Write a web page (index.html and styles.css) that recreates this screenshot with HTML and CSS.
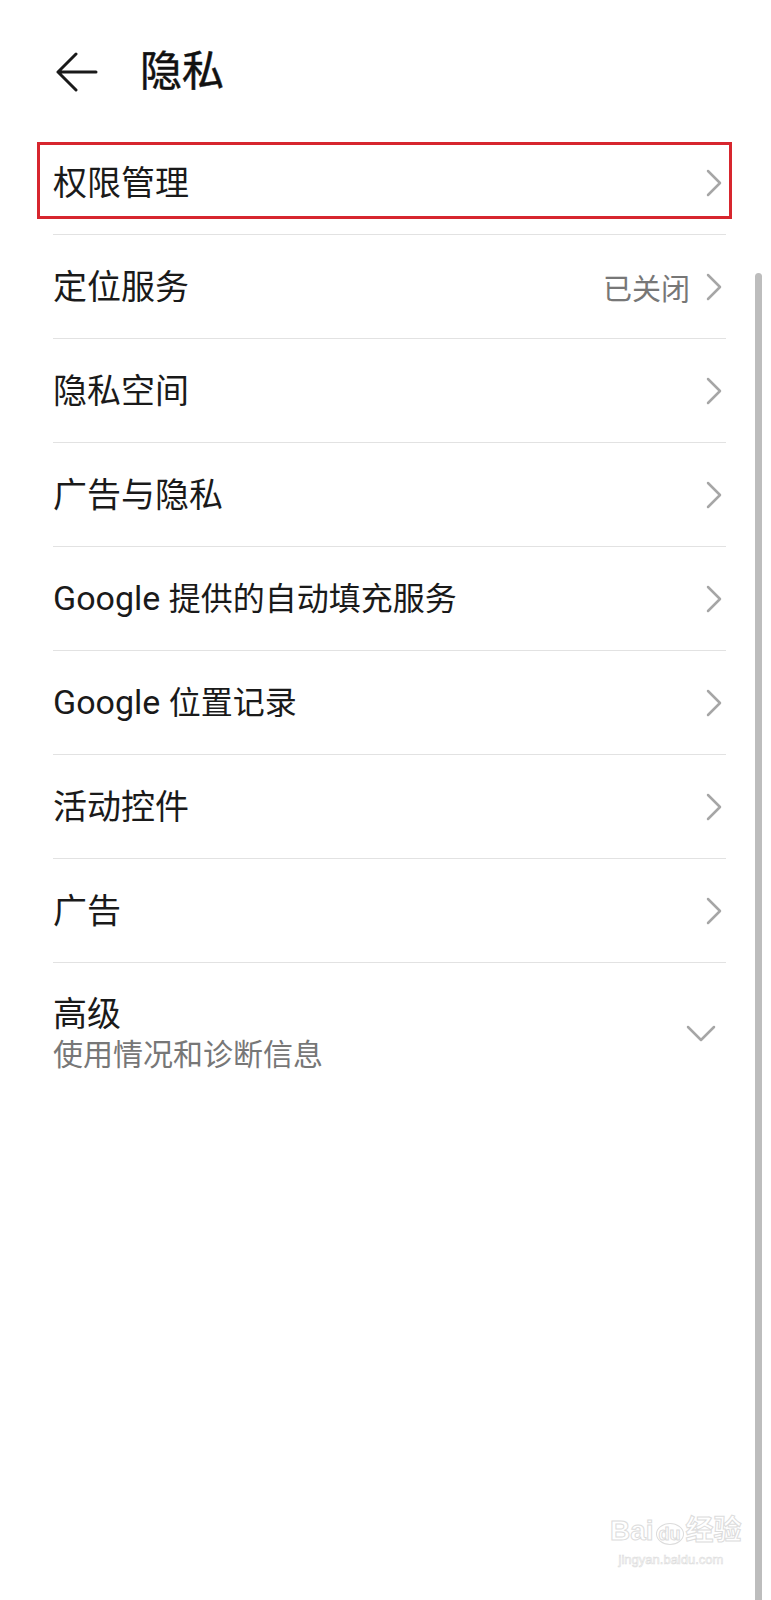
FILE: index.html
```html
<!DOCTYPE html>
<html lang="zh-CN">
<head>
  <meta charset="UTF-8" />
  <meta name="viewport" content="width=device-width, initial-scale=1.0" />
  <title>隐私</title>
  <link rel="stylesheet" href="styles.css">
</head>
<body>
<div class="screen">
  <!-- 顶部标题栏 -->
  <div class="topbar">
    <svg class="back" width="42" height="40" viewBox="0 0 42 40">
      <path d="M20 2 L2 20 L20 38 M2 20 H40" fill="none" stroke="#1a1a1a" stroke-width="3" stroke-linecap="round" stroke-linejoin="round"/>
    </svg>
    <h1>隐私</h1>
  </div>

  <!-- 设置列表 -->
  <div class="list">
    <div class="row">
      <span class="label">权限管理</span>
      <svg class="chev" width="16" height="28" viewBox="0 0 16 28"><path d="M2 2 L14 14 L2 26" /></svg>
      <div class="mark"></div>
    </div>
    <div class="row">
      <span class="label">定位服务</span>
      <span class="value">已关闭</span>
      <svg class="chev" width="16" height="28" viewBox="0 0 16 28"><path d="M2 2 L14 14 L2 26" /></svg>
    </div>
    <div class="row">
      <span class="label">隐私空间</span>
      <svg class="chev" width="16" height="28" viewBox="0 0 16 28"><path d="M2 2 L14 14 L2 26" /></svg>
    </div>
    <div class="row">
      <span class="label">广告与隐私</span>
      <svg class="chev" width="16" height="28" viewBox="0 0 16 28"><path d="M2 2 L14 14 L2 26" /></svg>
    </div>
    <div class="row">
      <span class="label">Google <span class="narrow">提供的自动填充服务</span></span>
      <svg class="chev" width="16" height="28" viewBox="0 0 16 28"><path d="M2 2 L14 14 L2 26" /></svg>
    </div>
    <div class="row">
      <span class="label">Google <span class="narrow">位置记录</span></span>
      <svg class="chev" width="16" height="28" viewBox="0 0 16 28"><path d="M2 2 L14 14 L2 26" /></svg>
    </div>
    <div class="row">
      <span class="label">活动控件</span>
      <svg class="chev" width="16" height="28" viewBox="0 0 16 28"><path d="M2 2 L14 14 L2 26" /></svg>
    </div>
    <div class="row">
      <span class="label">广告</span>
      <svg class="chev" width="16" height="28" viewBox="0 0 16 28"><path d="M2 2 L14 14 L2 26" /></svg>
    </div>
    <div class="row row-tall">
      <div class="text">
        <span class="label">高级</span>
        <span class="sub">使用情况和诊断信息</span>
      </div>
      <svg class="chev-down" width="30" height="18" viewBox="0 0 30 18"><path d="M2 2 L15 15 L28 2" /></svg>
    </div>
  </div>

  <!-- 滚动条 -->
  <div class="scrollbar"></div>

  <!-- 水印 -->
  <div class="watermark">
    <div class="wm-top">Bai<span class="wm-du">du</span>经验</div>
    <div class="wm-url">jingyan.baidu.com</div>
  </div>
</div>
</body>
</html>
```

FILE: styles.css
```css
/* 页面 */
body {
  margin: 0;
  background: #fff;
  font-family: Roboto, "Noto Sans CJK SC", sans-serif;
  color: #1a1a1a;
}

.screen {
  position: relative;
  width: 771px;
  height: 1600px;
  overflow: hidden;
}

/* 标题栏 */
.topbar {
  display: flex;
  align-items: center;
  height: 131px;
  padding-left: 56px;
  padding-top: 13px;
  box-sizing: border-box;
}

.back {
  display: block;
  margin-right: 42px;
}

.topbar h1 {
  margin: 0;
  font-size: 42px;
  font-weight: 400;
  line-height: 1;
  color: #111;
  -webkit-text-stroke: 0.5px #111;
}

/* 列表 */
.list {
  margin: 0 45px 0 53px;
}

.row {
  position: relative;
  display: flex;
  align-items: center;
  height: 103px;
  border-bottom: 1px solid #e2e2e2;
}

.label {
  flex: 1;
  font-size: 34px;
  line-height: 42px;
  color: #1a1a1a;
}

.narrow {
  font-size: 32px;
}

.value {
  font-size: 29px;
  color: #777;
  margin-right: 16px;
}

.chev {
  margin-right: 4px;
}

.chev path,
.chev-down path {
  fill: none;
  stroke: #a6a6a6;
  stroke-width: 2.5;
  stroke-linecap: round;
  stroke-linejoin: round;
}

/* 红色标记框 */
.mark {
  position: absolute;
  left: -16px;
  right: -6px;
  top: 11px;
  height: 77px;
  border: 3px solid #d7262e;
  box-sizing: border-box;
}

/* 高级 */
.row-tall {
  height: auto;
  padding: 30px 0 18px;
  border-bottom: none;
}

.row-tall .text {
  flex: 1;
  display: flex;
  flex-direction: column;
}

.sub {
  font-size: 30px;
  line-height: 40px;
  color: #777;
}

.chev-down {
  margin-right: 10px;
}

/* 滚动条 */
.scrollbar {
  position: absolute;
  left: 755px;
  top: 273px;
  bottom: 0;
  width: 7px;
  border-radius: 4px 4px 0 0;
  background: #bdbdbd;
}

/* 水印 */
.watermark {
  position: absolute;
  left: 610px;
  top: 1514px;
  width: 122px;
  color: #fff;
  -webkit-text-stroke: 1px #dcdcdc;
  font-family: "Liberation Sans", "Noto Sans CJK SC", sans-serif;
  text-align: center;
}

.wm-top {
  font-size: 28px;
  line-height: 34px;
  font-weight: 700;
  white-space: nowrap;
}

.wm-du {
  font-size: 18px;
  margin: 0 2px;
  border: 1px solid #dcdcdc;
  border-radius: 50%;
  padding: 0 2px;
}

.wm-url {
  font-size: 13px;
  line-height: 18px;
  -webkit-text-stroke: 0.6px #dcdcdc;
}
```
